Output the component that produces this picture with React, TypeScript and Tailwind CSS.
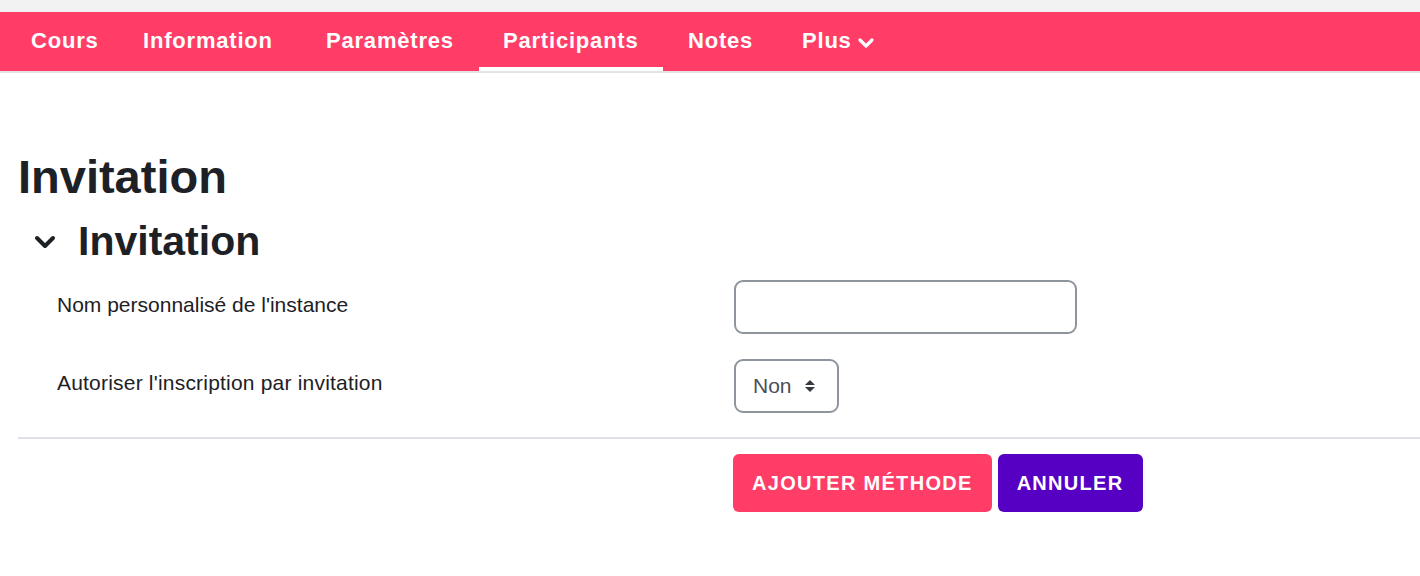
import React from "react";

const navItems: [string, string][] = [
  ["Cours", "w-[64px]"],
  ["Information", "w-[135px]"],
  ["Paramètres", "w-[129px]"],
  ["Participants", "w-[137px]"],
  ["Notes", "w-[66px]"],
];

export default function App() {
  return (
    <div className="w-[1420px] h-[576px] bg-white overflow-hidden" style={{ fontFamily: '"Liberation Sans", Arial, sans-serif' }}>
      <div className="h-[12px] bg-[#f2f2f2]" />
      <nav className="h-[59px] bg-[#ff3d67] flex items-stretch pl-[7px]">
        {navItems.map(([n, w]) => (
          <div key={n} className="relative flex items-center px-[24px] text-white font-bold text-[22px] tracking-[0.8px]">
            <span className={`pb-[2px] whitespace-nowrap shrink-0 ${w}`}>{n}</span>
            {n === "Participants" && <div className="absolute left-0 right-[1px] bottom-0 h-[4px] bg-white" />}
          </div>
        ))}
        <div className="flex items-center px-[24px] text-white font-bold text-[22px] tracking-[0.8px]">
          <span className="pb-[2px]">Plus</span>
          <svg width="18" height="12" viewBox="0 0 18 12" className="ml-[5px] mt-[2px]">
            <polyline points="3,3 9,9 15,3" fill="none" stroke="white" strokeWidth="3.2" strokeLinecap="round" strokeLinejoin="round" />
          </svg>
        </div>
      </nav>
      <div className="h-[2px] bg-[#e4e4e4]" />

      <div className="pl-[18px]">
        <h1 className="mt-[76px] text-[47px] leading-[55px] font-bold text-[#1d2125]">Invitation</h1>
        <div className="mt-[13px] flex items-center h-[48px]">
          <svg width="24" height="16" viewBox="0 0 24 16" className="ml-[15px] mr-[21px] mt-[2px]">
            <polyline points="4,4 12,12 20,4" fill="none" stroke="#1d2125" strokeWidth="4" strokeLinecap="round" strokeLinejoin="round" />
          </svg>
          <h2 className="text-[41px] leading-[48px] font-bold text-[#1d2125]">Invitation</h2>
        </div>

        <div className="mt-[15px] flex">
          <div className="w-[677px] ml-[39px] pt-[9px] text-[21px] leading-[31px] text-[#1d2125]">Nom personnalisé de l'instance</div>
          <div className="w-[343px] h-[54px] border-[2px] border-[#8f959d] rounded-[9px] bg-white" />
        </div>

        <div className="mt-[25px] flex">
          <div className="w-[677px] ml-[39px] pt-[8px] text-[21px] leading-[31px] text-[#1d2125] tracking-[0.2px]">Autoriser l'inscription par invitation</div>
          <div className="w-[105px] h-[54px] border-[2px] border-[#8f959d] rounded-[9px] bg-white flex items-center pl-[17px]">
            <span className="text-[21px] text-[#495057]">Non</span>
            <svg width="12" height="16" viewBox="0 0 12 16" className="ml-[12px]">
              <polygon points="1,7 6,2 11,7" fill="#343a40" />
              <polygon points="1,9 6,14 11,9" fill="#343a40" />
            </svg>
          </div>
        </div>

        <div className="mt-[24px] h-[2px] bg-[#dee2e6]" />

        <div className="mt-[15px] flex ml-[715px] gap-[6px]">
          <button className="h-[58px] px-[19px] rounded-[6px] bg-[#ff3d67] text-white font-bold text-[20px] tracking-[1.3px]">AJOUTER MÉTHODE</button>
          <button className="h-[58px] px-[19px] rounded-[6px] bg-[#5600c4] text-white font-bold text-[20px] tracking-[1.3px]">ANNULER</button>
        </div>
      </div>
    </div>
  );
}
